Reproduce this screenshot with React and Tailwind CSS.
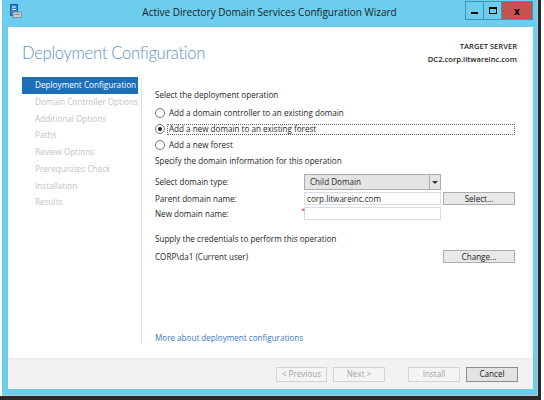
import React from 'react';

const navItems = [
  'Deployment Configuration',
  'Domain Controller Options',
  'Additional Options',
  'Paths',
  'Review Options',
  'Prerequisites Check',
  'Installation',
  'Results',
];

const AppIcon = () => (
  <svg width="12" height="14" viewBox="0 0 12 14">
    <rect x="0.5" y="0.5" width="7" height="11" fill="#2f7fd0" stroke="#1d5e9e" />
    <rect x="2" y="2.5" width="4" height="1" fill="#fff" />
    <rect x="2" y="5" width="4" height="1" fill="#fff" />
    <rect x="3" y="8" width="8.5" height="5.5" fill="#c9ced3" stroke="#7d868e" strokeWidth="0.8" />
    <rect x="4.5" y="10" width="5" height="1" fill="#7d868e" />
  </svg>
);

function Radio({ checked, label, focused }) {
  return (
    <div className="flex h-[16px] items-center">
      <span className="flex h-[10px] w-[10px] shrink-0 items-center justify-center rounded-full border border-[#777] bg-white">
        {checked && <span className="h-[4px] w-[4px] rounded-full bg-[#1a1a1a]" />}
      </span>
      <span
        className={
          focused
            ? 'ml-[2px] flex h-[11px] flex-1 items-center border border-dotted border-[#666] pl-[1px]'
            : 'ml-[3px] pl-[1px]'
        }
      >
        {label}
      </span>
    </div>
  );
}

function Btn({ children, disabled, strong, className = '' }) {
  return (
    <div
      className={`flex items-center justify-center border ${
        disabled
          ? 'border-[#d3d3d3] bg-[#f4f4f4] text-[#a3a3a3]'
          : strong
          ? 'border-[#8a8a8a] bg-[#e3e3e3] text-[#1a1a1a]'
          : 'border-[#adadad] bg-[#e9e9e9] text-[#1a1a1a]'
      } ${className}`}
    >
      {children}
    </div>
  );
}

export default function App() {
  return (
    <div className="h-[400px] w-[544px] overflow-hidden bg-white font-['Open_Sans','Noto_Sans',sans-serif]">
      <div className="h-[400px] w-[541px] border-r-[3px] border-b-[4px] border-[#2a2a2a] pl-[2px]">
        <div className="flex h-full w-full flex-col border-r border-b border-[#b7c3c8] bg-[#6ccdee]">
          {/* title bar */}
          <div className="grid h-[27px] shrink-0 grid-cols-[1fr_auto_1fr] items-start">
            <div className="pl-[8px] pt-[4px]">
              <AppIcon />
            </div>
            <div className="pt-[5px] text-[10px] leading-[14px] text-[#1b1b1b]">
              Active Directory Domain Services Configuration Wizard
            </div>
            <div className="flex justify-end pr-[4px] pt-[1px]">
              <div className="flex h-[19px] w-[19px] items-center justify-center border border-[#3f94b0] bg-[#6ccdee]">
                <span className="mt-[4px] h-[2px] w-[7px] bg-black" />
              </div>
              <div className="flex h-[19px] w-[18px] items-center justify-center border border-l-0 border-[#3f94b0] bg-[#6ccdee]">
                <span className="h-[7px] w-[8px] border border-t-2 border-black" />
              </div>
              <div className="flex h-[19px] w-[31px] items-center justify-center border border-l-0 border-[#3f94b0] bg-[#c75151] text-[10px] font-bold leading-none text-black">
                x
              </div>
            </div>
          </div>

          {/* client */}
          <div className="ml-[6px] mr-[4px] mb-[6px] flex flex-1 flex-col bg-white">
            <div className="flex h-[50px] shrink-0 justify-between">
              <div className="whitespace-nowrap pl-[14px] pt-[13px] font-['Lato','Open_Sans',sans-serif] text-[16.6px] font-light leading-[26px] tracking-[-0.3px] text-[#5a92bd]">
                Deployment Configuration
              </div>
              <div className="pr-[16px] pt-[13px] text-right text-[7.6px] leading-[13px] text-[#1f1f1f]">
                <div className="font-semibold">TARGET SERVER</div>
                <div className="font-semibold">DC2.corp.litwareinc.com</div>
              </div>
            </div>

            <div className="flex flex-1 pb-[14px] text-[8.1px] text-[#262626]">
              {/* nav */}
              <div className="ml-[14px] w-[120px] shrink-0 overflow-hidden border-r border-[#e4e4e4] pr-[3px]">
                {navItems.map((item, i) => (
                  <div
                    key={item}
                    className={`flex h-[16.75px] items-center whitespace-nowrap pl-[13px] text-[8.2px] ${
                      i === 0 ? 'bg-[#1c6fb7] text-white' : 'text-[#c3c3c3]'
                    }`}
                  >
                    {item}
                  </div>
                ))}
              </div>

              {/* content */}
              <div className="flex flex-1 flex-col pl-[13px] pr-[18px] leading-[12px]">
                <div className="mt-[12px]">Select the deployment operation</div>
                <div className="mt-[4px]">
                  <Radio label="Add a domain controller to an existing domain" />
                  <Radio checked focused label="Add a new domain to an existing forest" />
                  <Radio label="Add a new forest" />
                </div>

                <div className="mt-[2px]">Specify the domain information for this operation</div>

                <div className="mt-[7px] flex h-[16px] items-center">
                  <div className="w-[149px]">Select domain type:</div>
                  <div className="flex h-[16px] w-[137px] items-center border border-[#acacac] bg-[#e4e4e4]">
                    <span className="flex-1 pl-[5px]">Child Domain</span>
                    <span className="flex h-full w-[11px] items-center justify-center border-l border-[#acacac]">
                      <span className="border-x-[3px] border-t-[3px] border-x-transparent border-t-[#333]" />
                    </span>
                  </div>
                </div>

                <div className="mt-[2px] flex h-[13px] items-center">
                  <div className="w-[149px]">Parent domain name:</div>
                  <div className="flex h-[13px] w-[137px] items-center border border-[#d7dde2] bg-white pl-[2px]">
                    corp.litwareinc.com
                  </div>
                  <Btn className="ml-[2px] h-[13px] w-[72px]">Select...</Btn>
                </div>

                <div className="mt-[2px] flex h-[13px] items-center">
                  <div className="w-[146px]">New domain name:</div>
                  <div className="relative w-[3px] self-start text-[8px] leading-[6px] text-[#e04040]">*</div>
                  <div className="h-[13px] w-[137px] border border-[#d7dde2] bg-white" />
                </div>

                <div className="mt-[13px]">Supply the credentials to perform this operation</div>

                <div className="mt-[5px] flex h-[13px] items-center">
                  <div className="w-[288px]">CORP\da1 (Current user)</div>
                  <Btn className="h-[13px] w-[72px]">Change...</Btn>
                </div>

                <div className="mt-auto text-[#3a78c6]">More about deployment configurations</div>
              </div>
            </div>

            {/* footer */}
            <div className="flex h-[31px] shrink-0 items-center justify-end gap-[6px] border-t border-[#ece8ec] bg-[#f4f1f4] pr-[15px] text-[8.1px]">
              <Btn disabled className="h-[15px] w-[51px]">&lt; Previous</Btn>
              <Btn disabled className="h-[15px] w-[52px]">Next &gt;</Btn>
              <Btn disabled className="ml-[17px] h-[15px] w-[52px]">Install</Btn>
              <Btn strong className="h-[15px] w-[52px]">Cancel</Btn>
            </div>
          </div>
        </div>
      </div>
    </div>
  );
}
